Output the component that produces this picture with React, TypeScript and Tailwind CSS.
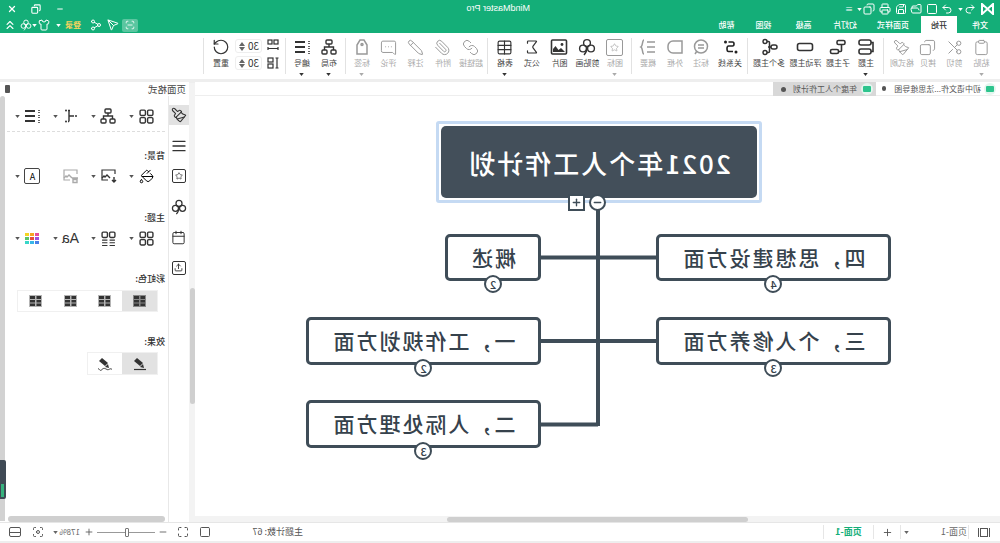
import React from "react";
import {
  Clipboard, Scissors, Copy, Paintbrush, Sigma, Table, Paperclip, Link, Pencil,
  MessageSquareMore, Undo2, Redo2, Save, Printer, FolderOpen, Shirt, ChevronsUp, X, Minus, Plus,
  Maximize, Focus, RotateCw, ScanLine, Square, Send, Share2,
  Calendar, Upload, PaintBucket, Star, AlignJustify,
} from "lucide-react";

const G = "#14ae78";

function Topic() {
  return (
    <svg width="18" height="18" viewBox="0 0 18 18" fill="none" stroke="#333" strokeWidth="1.6">
      <rect x="4" y="2" width="12" height="5" rx="2" />
      <rect x="4" y="11" width="12" height="5" rx="2" />
      <path d="M4 4.5H2v9h2" />
    </svg>
  );
}
function SubTopic() {
  return (
    <svg width="18" height="18" viewBox="0 0 18 18" fill="none" stroke="#333" strokeWidth="1.6">
      <rect x="2" y="2.5" width="8" height="4" rx="1.5" />
      <rect x="8.5" y="11.5" width="8" height="4" rx="1.5" />
      <path d="M5.5 6.5v6a1 1 0 0 0 1 1h2" />
    </svg>
  );
}
function Floating() {
  return (
    <svg width="18" height="18" viewBox="0 0 18 18" fill="none" stroke="#333" strokeWidth="1.6">
      <rect x="1.5" y="5.5" width="15" height="7" rx="2" />
    </svg>
  );
}
function Multi() {
  return (
    <svg width="18" height="18" viewBox="0 0 18 18" fill="none" stroke="#333" strokeWidth="1.5">
      <rect x="1" y="7" width="6" height="4" rx="2" />
      <circle cx="13" cy="3.5" r="2" />
      <circle cx="13" cy="14.5" r="2" />
      <path d="M7 9h3M11 3.5H9.5a1 1 0 0 0-1 1v9a1 1 0 0 0 1 1H11" />
    </svg>
  );
}
function Relation() {
  return (
    <svg width="18" height="18" viewBox="0 0 18 18" fill="none" stroke="#222">
      <circle cx="13.5" cy="4" r="1.5" fill="#222" stroke="none" />
      <circle cx="3" cy="14" r="1.5" fill="#222" stroke="none" />
      <path d="M10.5 4H6.5c-2 0-2 4 0 4h4c2 0 2 5.5 0 5.5H6" strokeWidth="1.6" />
    </svg>
  );
}
function Callout() {
  return (
    <svg width="18" height="18" viewBox="0 0 18 18" fill="none" stroke="#999" strokeWidth="1.5">
      <circle cx="9" cy="8.5" r="6.5" />
      <path d="M6 7h6M6 10h6M13 13l2 3" />
    </svg>
  );
}
function Boundary() {
  return (
    <svg width="18" height="18" viewBox="0 0 18 18" fill="none" stroke="#999" strokeWidth="1.5">
      <path d="M2 3h9a5 5 0 0 1 5 5v2a5 5 0 0 1-5 5H2z" />
    </svg>
  );
}
function Summary() {
  return (
    <svg width="18" height="18" viewBox="0 0 18 18" fill="none" stroke="#999" strokeWidth="1.5">
      <path d="M2 4h8M2 9h8M2 14h8M13 2c2 0 1 6 3 7-2 1-1 7-3 7" />
    </svg>
  );
}
function TagIcon() {
  return (
    <svg width="18" height="18" viewBox="0 0 18 18" fill="none" stroke="#999" strokeWidth="1.5">
      <path d="M4 7l3-5h4l3 5v9H4z" />
      <circle cx="9" cy="6.5" r="1" />
    </svg>
  );
}
function Trefoil({ s = 18, c = "#333" }: { s?: number; c?: string }) {
  return (
    <svg width={s} height={s} viewBox="0 0 18 18" fill="none" stroke={c} strokeWidth="1.4">
      <circle cx="9" cy="5" r="3.4" />
      <circle cx="5" cy="10.5" r="3.4" />
      <circle cx="13" cy="10.5" r="3.4" />
      <path d="M9 9c0 3 1 6 3 8" />
    </svg>
  );
}
function Picture({ s = 18, c = "#333" }: { s?: number; c?: string }) {
  return (
    <svg width={s} height={s} viewBox="0 0 18 18" fill="none" stroke={c} strokeWidth="1.6">
      <rect x="1.5" y="2" width="15" height="14" rx="1" />
      <circle cx="6" cy="6.5" r="1.4" fill={c} stroke="none" />
      <path d="M3 14l4-4 2.5 2 3-4 2.5 3v3z" fill={c} stroke="none" />
    </svg>
  );
}
function BgPicture({ c = "#333", extra }: { c?: string; extra: string }) {
  return (
    <svg width="17" height="16" viewBox="0 0 17 16" fill="none" stroke={c} strokeWidth="1.2">
      <path d="M2 6V2h13v10H9" />
      <path d="M7 10l3-3 2 2 1-1 2 2" strokeWidth="1.4" />
      <path d={extra} strokeWidth="1.4" />
    </svg>
  );
}
function IconBox({ children }: { children: React.ReactNode }) {
  return <div className="w-[16px] h-[16px] rounded-[2px] border-[1.5px] border-[#444] flex items-center justify-center">{children}</div>;
}
function Arrow({ c = "#555" }: { c?: string }) {
  return <svg width="5" height="3" viewBox="0 0 6 4" className="shrink-0"><path d="M0 0h6L3 4z" fill={c} /></svg>;
}
function Grid4({ size = 15 }: { size?: number }) {
  return (
    <svg width={size} height={size} viewBox="0 0 14 14" fill="none" stroke="#333" strokeWidth="1.3">
      <rect x="1" y="1" width="5" height="5" rx="1" /><rect x="8" y="1" width="5" height="5" rx="1" />
      <rect x="1" y="8" width="5" height="5" rx="1" /><rect x="8" y="8" width="5" height="5" rx="1" />
    </svg>
  );
}
function GridLines() {
  return (
    <svg width="15" height="15" viewBox="0 0 14 14" fill="none" stroke="#333" strokeWidth="1.3">
      <rect x="1" y="1" width="5" height="5" rx="1" /><rect x="8" y="1" width="5" height="5" rx="1" />
      <path d="M1 8.5h5M8 8.5h5M1 11h5M8 11h5M1 13.5h5M8 13.5h5" strokeWidth="1" />
    </svg>
  );
}
function OrgTree() {
  return (
    <svg width="16" height="16" viewBox="0 0 16 16" fill="none" stroke="#333" strokeWidth="1.4">
      <rect x="5" y="1" width="6" height="4" rx="1" /><rect x="1" y="11" width="5" height="4" rx="1" /><rect x="10" y="11" width="5" height="4" rx="1" />
      <path d="M8 5v3M3.5 11V8h9v3" />
    </svg>
  );
}
function Numbered() {
  return (
    <svg width="16" height="16" viewBox="0 0 16 16" fill="none" stroke="#333" strokeWidth="1.8">
      <path d="M1 2v3M1 7v3M1 12v3" strokeDasharray="1 1" strokeWidth="1.5" />
      <path d="M5 3h10M5 8h10M5 13h10" />
    </svg>
  );
}
function Struct() {
  return (
    <svg width="16" height="16" viewBox="0 0 16 16" fill="none" stroke="#333" strokeWidth="1.4">
      <circle cx="2" cy="8" r="1" fill="#333" stroke="none" />
      <path d="M4 8h5M8 2.5h2M9 2.5v11M9 13.5h1" />
      <circle cx="12" cy="2.5" r="1" fill="#333" stroke="none" /><circle cx="12" cy="13.5" r="1" fill="#333" stroke="none" />
    </svg>
  );
}
function TableSmall({ on = false }: { on?: boolean }) {
  return (
    <svg width="13" height="12" viewBox="0 0 13 12">
      <rect width="13" height="12" fill={on ? "#888" : "#b5b5b5"} />
      <path d="M1 1h4.5v3H1zM7 1h5v3H7zM1 5h4.5v2.5H1zM7 5h5v2.5H7zM1 8.5h4.5V11H1zM7 8.5h5V11H7z" fill="#333" />
    </svg>
  );
}

function RBtn({ w, label, off, arrow, children }: { w: string; label: string; off?: boolean; arrow?: boolean; children: React.ReactNode }) {
  return (
    <div className={`${w} shrink-0 h-full flex flex-col items-center pt-[5px]`}>
      <div className={`h-[18px] flex items-center justify-center ${off ? "text-[#999]" : "text-[#333]"}`}>{children}</div>
      <div className={`text-[8px] leading-[14px] whitespace-nowrap ${off ? "text-[#aaa]" : "text-[#444]"}`}>{label}</div>
      {arrow && <div className="mt-[3px] leading-[0]"><Arrow c={off ? "#aaa" : "#333"} /></div>}
    </div>
  );
}
function Sep({ w }: { w: string }) {
  return <div className={`${w} shrink-0 h-full flex justify-center py-[5px]`}><div className="w-px h-full bg-[#e2e2e2]" /></div>;
}
function Spin() {
  return (
    <div className="w-[27px] h-[14px] rounded-[3px] border border-[#eee] flex items-center justify-between pl-[2px] pr-[3px] text-[10px] text-[#333]">
      <span className="leading-none">30</span>
      <span className="flex flex-col items-center gap-[1px]">
        <svg width="6" height="4" viewBox="0 0 6 4"><path d="M0 4h6L3 0z" fill="#666" /></svg>
        <svg width="6" height="4" viewBox="0 0 6 4"><path d="M0 0h6L3 4z" fill="#666" /></svg>
      </span>
    </div>
  );
}
function Ribbon() {
  const s = 17, sw = 1.4;
  return (
    <div className="h-[46px] shrink-0 bg-white flex pl-[5px]">
      <RBtn w="w-[27px]" label="粘贴" off arrow><Clipboard size={s} strokeWidth={sw} /></RBtn>
      <RBtn w="w-[27px]" label="剪切" off><Scissors size={s} strokeWidth={sw} /></RBtn>
      <RBtn w="w-[26px]" label="拷贝" off><Copy size={s} strokeWidth={sw} /></RBtn>
      <RBtn w="w-[26px]" label="格式刷" off><Paintbrush size={s} strokeWidth={sw} /></RBtn>
      <Sep w="w-[11px]" />
      <RBtn w="w-[24px]" label="主题" arrow><Topic /></RBtn>
      <RBtn w="w-[32px]" label="子主题"><SubTopic /></RBtn>
      <RBtn w="w-[33px]" label="浮动主题"><Floating /></RBtn>
      <RBtn w="w-[40px]" label="多个主题"><Multi /></RBtn>
      <Sep w="w-[2px]" />
      <RBtn w="w-[34px]" label="关系线"><Relation /></RBtn>
      <RBtn w="w-[24px]" label="标注" off><Callout /></RBtn>
      <RBtn w="w-[28px]" label="外框" off><Boundary /></RBtn>
      <RBtn w="w-[26px]" label="概要" off><Summary /></RBtn>
      <Sep w="w-[6px]" />
      <RBtn w="w-[28px]" label="图标" off arrow>
        <div className="w-[17px] h-[17px] border-[1.5px] border-[#999] rounded-[2px] flex items-center justify-center"><Star size={9} strokeWidth={1.5} /></div>
      </RBtn>
      <RBtn w="w-[27px]" label="剪贴画"><Trefoil /></RBtn>
      <RBtn w="w-[29px]" label="图片"><Picture /></RBtn>
      <RBtn w="w-[26px]" label="公式"><Sigma size={18} strokeWidth={1.6} /></RBtn>
      <RBtn w="w-[28px]" label="表格" arrow><Table size={s} strokeWidth={1.6} /></RBtn>
      <Sep w="w-[6px]" />
      <RBtn w="w-[28px]" label="超链接" off><Link size={s} strokeWidth={sw} /></RBtn>
      <RBtn w="w-[28px]" label="附件" off><Paperclip size={s} strokeWidth={sw} /></RBtn>
      <RBtn w="w-[27px]" label="注释" off><Pencil size={s} strokeWidth={sw} /></RBtn>
      <RBtn w="w-[27px]" label="评论" off><MessageSquareMore size={s} strokeWidth={sw} /></RBtn>
      <RBtn w="w-[26px]" label="标签" off arrow><TagIcon /></RBtn>
      <Sep w="w-[6px]" />
      <RBtn w="w-[28px]" label="布局" arrow><OrgTree /></RBtn>
      <RBtn w="w-[26px]" label="编号" arrow><Numbered /></RBtn>
      <Sep w="w-[6px]" />
      <div className="w-[19px] shrink-0 flex flex-col items-center pt-[6px] gap-[6px] pl-[1px]">
        <svg width="12" height="12" viewBox="0 0 12 12" fill="none" stroke="#333" strokeWidth="1.2"><rect x="1" y="1" width="4" height="4" /><rect x="7" y="1" width="4" height="4" /><path d="M1 8v3M11 8v3M1 9.5h10" /></svg>
        <svg width="12" height="12" viewBox="0 0 12 12" fill="none" stroke="#333" strokeWidth="1.2"><path d="M2 1v10M0.5 1h3M0.5 11h3" /><rect x="6" y="1" width="5" height="4" /><rect x="6" y="7" width="5" height="4" /></svg>
      </div>
      <div className="w-[30px] shrink-0 flex flex-col pt-[6px] gap-[3px] pl-[2px]"><Spin /><Spin /></div>
      <RBtn w="w-[26px]" label="重置"><RotateCw size={18} strokeWidth={1.6} /></RBtn>
      <div className="ml-[4px] py-[5px]"><div className="w-px h-full bg-[#e2e2e2]" /></div>
    </div>
  );
}

function TitleBar() {
  return (
    <div className="h-[33px] shrink-0 relative text-white" style={{ backgroundColor: G }}>
      <div className="flex items-center h-[16px] pl-[6px] pt-[2px]">
        <svg width="13" height="12" viewBox="0 0 13 12" fill="none" stroke="white" strokeWidth="2" className="shrink-0"><path d="M1 1l5.5 5L12 1v10L6.5 6 1 11z" /></svg>
        <Undo2 size={12} className="ml-[5px]" /><span className="ml-[1px]"><Arrow c="#fff" /></span>
        <Redo2 size={12} className="ml-[5px]" />
        <Square size={12} className="ml-[3px]" />
        <FolderOpen size={12} className="ml-[4px]" />
        <Save size={12} className="ml-[3px]" />
        <Printer size={12} className="ml-[4px]" />
        <Copy size={12} className="ml-[4px]" />
        <span className="ml-[1px]"><Arrow c="#fff" /></span>
        <span className="ml-[4px] text-[8px] leading-none">≡</span>
        <div className="flex-1" />
        <span className="absolute left-[470px] top-[2px] text-[9px] leading-[13px] font-['Liberation_Sans',sans-serif]">MindMaster Pro</span>
        <Minus size={8} strokeWidth={3} />
        <Copy size={10} className="ml-[15px]" strokeWidth={2.6} />
        <X size={10} className="ml-[14px] mr-[7px]" strokeWidth={3} />
      </div>
      <div className="flex items-end h-[17px] text-[8px] font-medium">
        <div className="w-[43px] h-[16px] flex items-center justify-center pr-[3px]">文件</div>
        <div className="w-[36px] h-[17px] bg-white text-[#333] flex items-center justify-center">开始</div>
        <div className="w-[56px] h-[16px] flex items-center justify-center">页面样式</div>
        <div className="w-[40px] h-[16px] flex items-center justify-center">幻灯片</div>
        <div className="w-[43px] h-[16px] flex items-center justify-center">高级</div>
        <div className="w-[37px] h-[16px] flex items-center justify-center">视图</div>
        <div className="w-[37px] h-[16px] flex items-center justify-center">帮助</div>
        <div className="flex-1" />
        <div className="h-[16px] flex items-center pr-[3px]">
          <span className="w-[16px] h-[13px] rounded-[2px] bg-white/30 flex items-center justify-center"><ScanLine size={10} /></span>
          <Send size={12} className="ml-[3px]" />
          <Share2 size={12} className="ml-[5px]" />
          <span className="ml-[9px] text-[#f4d35e] text-[8px] font-bold w-[15px] whitespace-nowrap">登录</span>
          <span className="ml-[5px]"><Arrow c="#fff" /></span>
          <Shirt size={12} className="ml-[6px]" />
          <span className="ml-[1px]"><Arrow c="#fff" /></span>
          <Trefoil s={12} c="#fff" />
          <ChevronsUp size={14} className="ml-[3px]" />
        </div>
      </div>
    </div>
  );
}

function MapIcon() {
  return (
    <span className="w-[12px] h-[12px] rounded-full bg-[#e4f6ef] flex items-center justify-center shrink-0">
      <span className="w-[8px] h-[6px] rounded-[1px] bg-[#2dc48d]" />
    </span>
  );
}
function TabsRow() {
  return (
    <div className="h-[14px] shrink-0 bg-white border-b border-[#eee] flex items-stretch text-[8px] text-[#555]">
      <div className="w-[10px]" />
      <div className="w-[114px] flex items-center -ml-[6px] pr-0">
        <MapIcon /><span className="ml-[3px] whitespace-nowrap w-[85px]">初中语文作...法思维导图</span>
        <span className="ml-[10px] w-[5px] h-[5px] rounded-full bg-[#555]" />
      </div>
      <div className="w-[103px] ml-[6px] h-[14px] bg-[#d8d8d8] flex items-center pl-[3px]">
        <MapIcon /><span className="ml-[4px] whitespace-nowrap w-[64px]">年度个人工作计划</span>
        <span className="ml-[7px] w-[5px] h-[5px] rounded-full bg-[#555]" />
      </div>
    </div>
  );
}

function Node({ pos, text, n }: { pos: string; text: string; n: string }) {
  return (
    <div className={`absolute ${pos} bg-white border-[3px] border-[#3f4d58] rounded-[5px] flex items-center justify-center text-[21px] font-medium tracking-[2px] text-[#36424c] whitespace-nowrap`}>
      {text}
      <div className="absolute left-1/2 -translate-x-1/2 -bottom-[15px] w-[18px] h-[18px] rounded-full border-[2px] border-[#3f4d58] bg-white text-[11px] tracking-normal flex items-center justify-center leading-none">{n}</div>
    </div>
  );
}

function Canvas() {
  return (
    <div className="relative flex-1 bg-white overflow-hidden">
      <svg className="absolute left-0 top-0" width="805" height="420" fill="none" stroke="#3f4d58" strokeWidth="4">
        <path d="M402 105V330" />
        <path d="M344 161.5H459M344 245H459M402 328.5H459" />
      </svg>
      <div className="absolute left-[238px] top-[25px] w-[326px] h-[82px] border-[3px] border-[#c5daf3] rounded-[3px] p-[2px]">
        <div className="w-full h-full bg-[#434f5a] rounded-[5px] flex items-center justify-center text-white text-[26px] font-medium tracking-[2px] whitespace-nowrap">2021年个人工作计划</div>
      </div>
      <div className="absolute left-[394px] top-[98px] w-[17px] h-[17px] rounded-full border-[2px] border-[#3f4d58] bg-white flex items-center justify-center">
        <Minus size={11} strokeWidth={3} className="text-[#3f4d58]" />
      </div>
      <div className="absolute left-[415px] top-[98px] w-[17px] h-[17px] border-[2px] border-[#3f4d58] bg-white flex items-center justify-center">
        <Plus size={11} strokeWidth={3} className="text-[#3f4d58]" />
      </div>
      <Node pos="left-[109px] top-[138px] w-[235px] h-[47px]" text="四，思想建设方面" n="4" />
      <Node pos="left-[109px] top-[221px] w-[235px] h-[48px]" text="三，个人修养方面" n="3" />
      <Node pos="left-[459px] top-[138px] w-[96px] h-[47px]" text="概述" n="2" />
      <Node pos="left-[459px] top-[221px] w-[235px] h-[48px]" text="一，工作规划方面" n="2" />
      <Node pos="left-[459px] top-[304px] w-[235px] h-[48px]" text="二，人际处理方面" n="3" />
    </div>
  );
}

function Cell({ children }: { children: React.ReactNode }) {
  return (
    <div className="w-[38px] flex items-center pl-[3px] gap-[4px]">
      <div className="w-[17px] h-[17px] flex items-center justify-center">{children}</div>
      <Arrow />
    </div>
  );
}
function Row({ cls, children }: { cls: string; children: React.ReactNode }) {
  return <div className={`h-[20px] pl-[10px] flex items-center ${cls}`}>{children}</div>;
}
function Label({ cls, children }: { cls: string; children: React.ReactNode }) {
  return <div className={`h-[14px] pl-[3px] text-[9px] font-medium leading-[14px] text-[#333] ${cls}`}>{children}</div>;
}
function Side() {
  const strip = "w-[20px] h-[20px] flex items-center justify-center text-[#333]";
  return (
    <div className="w-[189px] shrink-0 flex flex-col">
      <div className="h-[14px] shrink-0 relative flex items-center pl-[3px] text-[9.5px] text-[#444]">
        页面格式
        <span className="absolute right-[5px] top-[3px] w-[5px] h-[8px] bg-[#555] rounded-[1px]" />
      </div>
      <div className="flex-1 flex min-h-0">
        <div className="w-[21px] shrink-0 border-r border-[#e8e8e8] pt-[9px] flex flex-col gap-[10.6px]">
          <div className={`${strip} bg-[#e2e2e2]`}><Paintbrush size={16} strokeWidth={1.6} /></div>
          <div className={strip}><AlignJustify size={16} strokeWidth={2} /></div>
          <div className={strip}><div className="w-[14px] h-[14px] rounded-[2px] border-[1.5px] border-[#333] flex items-center justify-center"><Star size={8} strokeWidth={2} /></div></div>
          <div className={strip}><Trefoil s={16} /></div>
          <div className={strip}><Calendar size={15} strokeWidth={1.6} /></div>
          <div className={strip}><div className="w-[14px] h-[14px] rounded-[2px] border-[1.5px] border-[#333] flex items-center justify-center"><Upload size={9} strokeWidth={2.4} /></div></div>
        </div>
        <div className="flex-1 relative flex min-w-0">
          <div className="flex-1 min-w-0 flex flex-col">
            <Row cls="mt-[10px]"><Cell><Grid4 /></Cell><Cell><OrgTree /></Cell><Cell><Struct /></Cell><Cell><Numbered /></Cell></Row>
            <div className="mt-[5px] ml-[3px] mr-[2px] border-t border-dashed border-[#ddd]" />
            <Label cls="mt-[17px]">背景:</Label>
            <Row cls="mt-[3px]">
              <Cell><PaintBucket size={15} strokeWidth={1.6} /></Cell>
              <Cell><BgPicture extra="M3 9v5M1 12l2 2 2-2" /></Cell>
              <div className="w-[38px] pl-[3px]"><BgPicture c="#aaa" extra="M1 10h6M2 11.5h4v3h-4z" /></div>
              <Cell><IconBox><span className="text-[9px] leading-none">A</span></IconBox></Cell>
            </Row>
            <Label cls="mt-[25px]">主题:</Label>
            <Row cls="mt-[3px]">
              <Cell><Grid4 /></Cell>
              <Cell><GridLines /></Cell>
              <Cell><span className="text-[14px] leading-none font-['Liberation_Sans',sans-serif] text-[#333]">Aa</span></Cell>
              <Cell>
                <div className="grid grid-cols-3 gap-[1px]">
                  <i className="w-[4px] h-[3px] bg-[#e74c9c]" /><i className="w-[4px] h-[3px] bg-[#f5a623]" /><i className="w-[4px] h-[3px] bg-[#f5d423]" />
                  <i className="w-[4px] h-[3px] bg-[#9b51e0]" /><i className="w-[4px] h-[3px] bg-[#e74c3c]" /><i className="w-[4px] h-[3px] bg-[#5cc36a]" />
                  <i className="w-[4px] h-[3px] bg-[#4a7fe8]" /><i className="w-[4px] h-[3px] bg-[#38b6e8]" /><i className="w-[4px] h-[3px] bg-[#38d6c8]" />
                </div>
              </Cell>
            </Row>
            <Label cls="mt-[24px]">彩虹色:</Label>
            <div className="mt-[4px] ml-[10px] w-[141px] h-[22px] border border-[#f0f0f0] flex">
              <div className="flex-1 bg-[#e2e2e2] flex items-center justify-center"><TableSmall on /></div>
              <div className="flex-1 flex items-center justify-center"><TableSmall /></div>
              <div className="flex-1 flex items-center justify-center"><TableSmall /></div>
              <div className="flex-1 flex items-center justify-center"><TableSmall /></div>
            </div>
            <Label cls="mt-[23px]">效果:</Label>
            <div className="mt-[3px] ml-[10px] w-[71px] h-[23px] border border-[#f0f0f0] flex">
              <div className="flex-1 bg-[#e2e2e2] flex items-center justify-center">
                <svg width="14" height="14" viewBox="0 0 14 14"><path d="M10 1l3 3-6 5-3-3z" fill="#333" /><path d="M4 7l3 3-4 1z" fill="#333" /><path d="M1 12.5h12" stroke="#333" strokeWidth="1.2" /></svg>
              </div>
              <div className="flex-1 flex items-center justify-center">
                <svg width="16" height="14" viewBox="0 0 16 14" fill="none"><path d="M11 1l3 3-6 5-3-3z" fill="#333" /><path d="M5 7l3 3-4 1z" fill="#333" /><path d="M1 12.5c2-2 3 1 5 0s3-2 5 0 2 0 4-1" stroke="#333" strokeWidth="1" /></svg>
              </div>
            </div>
            <div className="flex-1" />
            <div className="h-[6px] ml-[3px] mr-[3px] bg-[#cfcfcf] rounded-full" />
          </div>
          <div className="w-[5px] shrink-0 mb-[1px] bg-[#d2d2d2] rounded-t-[3px]" />
          <div className="absolute right-0 top-[364px] w-[6px] h-[39px] bg-[#3f4a55] rounded-l-[2px] flex flex-col justify-end pb-[2px]">
            <div className="ml-[2px] w-[3px] h-[13px] bg-[#36b37e]" />
          </div>
        </div>
      </div>
    </div>
  );
}

function StatusBar() {
  const ic = "text-[#555] shrink-0";
  const vsep = "w-[1px] h-[14px] bg-[#e6e6e6] shrink-0";
  return (
    <div className="h-[21px] shrink-0 bg-white border-t border-[#e6e6e6] border-b-2 border-b-[#eee] flex items-center text-[9px] text-[#666]">
      <div className="w-[31px] shrink-0 flex justify-center">
        <div className="w-[12px] h-[9px] border-x border-[#555] flex justify-center"><div className="w-[8px] h-[9px] border border-[#555]" /></div>
      </div>
      <div className={vsep} />
      <div className="w-[59px] shrink-0 pl-[1px]">页面-1</div>
      <Arrow c="#666" />
      <div className="w-[3px] shrink-0" />
      <div className={vsep} />
      <div className="w-[7px] shrink-0" />
      <Plus size={11} className={ic} />
      <div className="w-[8px] shrink-0" />
      <div className={vsep} />
      <div className="w-[49px] shrink-0 text-center font-bold" style={{ color: G }}>页面-1</div>
      <div className={vsep} />
      <div className="w-[520px] shrink-0" />
      <span className="w-[48px] shrink-0 text-[#555] whitespace-nowrap">主题计数: 67</span>
      <div className="w-[44px] shrink-0" />
      <Square size={12} className={ic} />
      <div className="w-[10px] shrink-0" />
      <Maximize size={12} className={ic} />
      <div className="w-[9px] shrink-0" />
      <Minus size={10} className={ic} />
      <div className="relative w-[58px] h-px bg-[#999] mx-[3px] shrink-0">
        <span className="absolute left-[26px] -top-[4px] w-[4px] h-[9px] bg-white border border-[#777] rounded-[1px]" />
      </div>
      <Plus size={10} className={ic} />
      <span className="ml-[4px] w-[18px] shrink-0 whitespace-nowrap text-[8px]">178%</span>
      <span className="ml-[4px]"><Arrow c="#666" /></span>
      <div className="w-[9px] shrink-0" />
      <Focus size={12} className={ic} />
      <div className="w-[11px] shrink-0" />
      <div className="w-[12px] h-[10px] border border-[#555] rounded-[2px] flex items-center shrink-0"><div className="w-full h-px bg-[#555]" /></div>
    </div>
  );
}

export default function App() {
  return (
    <div className="w-[1000px] h-[543px] bg-white overflow-hidden flex flex-col -scale-x-100 font-['Noto_Sans_CJK_SC','Liberation_Sans',sans-serif]">
      <TitleBar />
      <Ribbon />
      <div className="h-[3px] shrink-0 bg-[#eeeeee]" />
      <div className="flex-1 flex min-h-0">
        <div className="w-[805px] shrink-0 flex flex-col">
          <TabsRow />
          <Canvas />
          <div className="h-[6px] shrink-0 bg-[#f3f3f3] flex justify-start pl-[252px]">
            <div className="w-[301px] h-[5px] mt-[1px] bg-[#cfcfcf] rounded-full" />
          </div>
        </div>
        <div className="w-[6px] shrink-0 flex flex-col border-t border-[#eee] bg-[#f3f3f3]">
          <div className="h-[205px]" />
          <div className="h-[116px] bg-[#cfcfcf] rounded-full w-[5px]" />
        </div>
        <Side />
      </div>
      <StatusBar />
    </div>
  );
}
